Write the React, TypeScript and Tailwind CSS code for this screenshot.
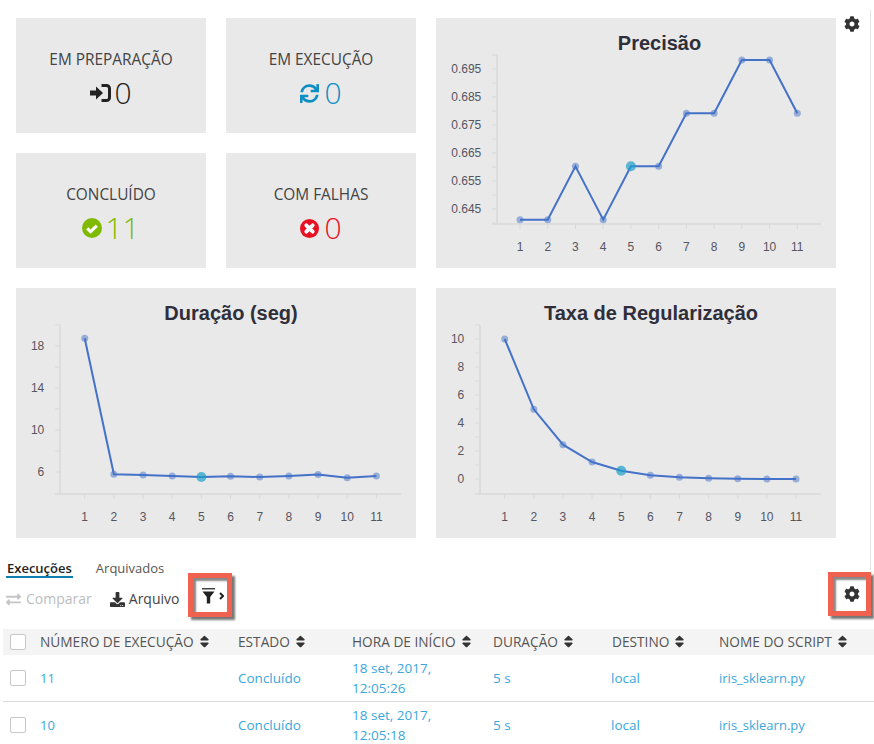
import { FaCog, FaSort, FaExchangeAlt, FaDownload, FaSync } from 'react-icons/fa';
import type { ReactNode } from 'react';

const FONT = 'font-["Open_Sans","Noto_Sans",sans-serif]';

interface ChartProps {
    title: string;
    titleX: number;
    axisX: number;
    lastX: number;
    firstTick: number;
    tickStep: number;
    minorTop: number;
    minorStep: number;
    minorCount: number;
    yLabels: { label: string; y: number }[];
    points: number[];
}

function Chart({ title, titleX, axisX, lastX, firstTick, tickStep, minorTop, minorStep, minorCount, yLabels, points }: ChartProps) {
    const xs = points.map((_, i) => firstTick + i * tickStep);
    const bottom = 206;
    return (
        <div className="relative h-[250px] w-[400px] bg-[#e9e9e9]">
            <svg width="400" height="250" viewBox="0 0 400 250" className="block">
                <text x={titleX} y="32" textAnchor="middle" fontSize="20" fontWeight="700" fill="#2f2f3b" fontFamily="Liberation Sans, sans-serif">{title}</text>
                <line x1={axisX} y1="37" x2={axisX} y2={bottom + 0.5} stroke="#d9d9d9" strokeWidth="1.5" />
                <line x1={axisX - 5} y1={bottom} x2={lastX} y2={bottom} stroke="#d9d9d9" strokeWidth="1.5" />
                {Array.from({ length: minorCount }).map((_, i) => (
                    <line key={i} x1={axisX - 5} x2={axisX} y1={minorTop + i * minorStep} y2={minorTop + i * minorStep} stroke="#d9d9d9" />
                ))}
                {yLabels.map((t) => (
                    <g key={t.label}>
                        <line x1={axisX - 5} x2={axisX} y1={t.y} y2={t.y} stroke="#d9d9d9" />
                        <text x={axisX - 15.7} y={t.y + 4.4} textAnchor="end" fontSize="12" fill="#55555f" fontFamily="Liberation Sans, sans-serif">{t.label}</text>
                    </g>
                ))}
                {xs.map((x, i) => (
                    <g key={i}>
                        <line x1={x} x2={x} y1={bottom} y2={bottom + 5} stroke="#d9d9d9" />
                        <text x={x} y={bottom + 26.5} textAnchor="middle" fontSize="12" fill="#55555f" fontFamily="Liberation Sans, sans-serif">{i + 1}</text>
                    </g>
                ))}
                <polyline fill="none" stroke="#4472c8" strokeWidth="2" points={xs.map((x, i) => `${x},${points[i]}`).join(' ')} />
                {xs.map((x, i) => (
                    i === 4
                        ? <circle key={i} cx={x} cy={points[i]} r="5" fill="#1e9fcb" fillOpacity="0.7" />
                        : <circle key={i} cx={x} cy={points[i]} r="3.5" fill="#4472c8" fillOpacity="0.5" />
                ))}
            </svg>
        </div>
    );
}

function StatCard({ label, icon, value, color, gap }: { label: string; icon: ReactNode; value: string; color: string; gap: string }) {
    return (
        <div className="flex h-[115px] w-[190px] flex-col items-center bg-[#e9e9e9] pt-[30px]">
            <div className="text-[15.4px] leading-[23px] text-[#444]">{label}</div>
            <div className={`mt-[3px] flex items-center text-[30px] font-[350] leading-[38px] ${gap} ${color}`}>
                {icon}
                <span>{value}</span>
            </div>
        </div>
    );
}

function SignInIcon() {
    return (
        <svg width="21" height="18" viewBox="0 0 21 18">
            <rect x="0" y="6.5" width="7" height="5" fill="currentColor" />
            <path d="M6 2.5L13 9L6 15.5Z" fill="currentColor" />
            <path d="M11.5 1.5H16.5A3 3 0 0 1 19.5 4.5V13.5A3 3 0 0 1 16.5 16.5H11.5" fill="none" stroke="currentColor" strokeWidth="3" />
        </svg>
    );
}

function CheckIcon() {
    return (
        <svg width="20" height="20" viewBox="0 0 20 20">
            <circle cx="10" cy="10" r="10" fill="currentColor" />
            <path d="M5.2 10.4L8.6 13.6L14.8 7.6" fill="none" stroke="#fff" strokeWidth="3.2" />
        </svg>
    );
}

function FailIcon() {
    return (
        <svg width="19" height="19" viewBox="0 0 19 19">
            <circle cx="9.5" cy="9.5" r="9.5" fill="currentColor" />
            <path d="M6.3 6.3L12.7 12.7M12.7 6.3L6.3 12.7" fill="none" stroke="#fff" strokeWidth="3.8" strokeLinecap="round" />
        </svg>
    );
}

function SortHead({ children }: { children: ReactNode }) {
    return (
        <div className="flex items-center gap-[3px] whitespace-nowrap uppercase">
            {children}
            <FaSort className="text-[15px] text-[#333]" />
        </div>
    );
}

function Checkbox() {
    return <div className="ml-[7px] h-[16px] w-[16px] rounded-[2px] border border-[#c8c8c8] bg-white" />;
}

function Row({ id, time }: { id: string; time: string }) {
    return (
        <div className="grid h-[47px] grid-cols-[37px_198px_114px_141px_119px_107px_1fr] items-center border-b border-[#d9d9d9] text-[13.5px] leading-[20px] text-[#3aa7dc]">
            <Checkbox />
            <div className="text-[13px]">{id}</div>
            <div>Concluído</div>
            <div>18 set, 2017,<br />{time}</div>
            <div>5 s</div>
            <div className="-ml-px">local</div>
            <div className="text-[13px]">iris_sklearn.py</div>
        </div>
    );
}

export default function App() {
    return (
        <div className={`relative h-[744px] w-[874px] overflow-hidden bg-white ${FONT}`}>
            {/* hairline on the right of the dashboard */}
            <div className="absolute left-[870px] top-[10px] h-[560px] w-px bg-[#e6e6e6]" />

            <div className="flex pl-4 pt-[18px]">
                <div className="grid w-[820px] grid-cols-[190px_190px_400px] gap-5">
                    <StatCard label="EM PREPARAÇÃO" value="0" color="text-[#222]" gap="gap-[3px]" icon={<SignInIcon />} />
                    <StatCard label="EM EXECUÇÃO" value="0" color="text-[#0e8fc4]" gap="gap-[5px]" icon={<FaSync className="text-[19px]" />} />
                    <div className="row-span-2">
                        <Chart
                            title="Precisão"
                            titleX={223.5}
                            axisX={61}
                            lastX={385}
                            firstTick={84}
                            tickStep={27.73}
                            minorTop={37}
                            minorStep={28}
                            minorCount={7}
                            yLabels={[
                                { label: '0.695', y: 51 },
                                { label: '0.685', y: 79 },
                                { label: '0.675', y: 107 },
                                { label: '0.665', y: 135 },
                                { label: '0.655', y: 163 },
                                { label: '0.645', y: 191 },
                            ]}
                            points={[201.7, 201.7, 148.3, 201.7, 148.3, 148.3, 95.3, 95.3, 42, 42, 95.3]}
                        />
                    </div>
                    <StatCard label="CONCLUÍDO" value="11" color="text-[#7fba00]" gap="gap-[3px]" icon={<CheckIcon />} />
                    <StatCard label="COM FALHAS" value="0" color="text-[#e81123]" gap="gap-[5px]" icon={<FailIcon />} />
                    <div className="col-span-2">
                        <Chart
                            title="Duração (seg)"
                            titleX={215}
                            axisX={44}
                            lastX={385}
                            firstTick={68.7}
                            tickStep={29.17}
                            minorTop={37}
                            minorStep={42}
                            minorCount={4}
                            yLabels={[
                                { label: '18', y: 58 },
                                { label: '14', y: 100 },
                                { label: '10', y: 142 },
                                { label: '6', y: 184 },
                            ]}
                            points={[50.3, 186.3, 187, 188, 189, 188.3, 189, 188, 186.5, 189.7, 188]}
                        />
                    </div>
                    <Chart
                        title="Taxa de Regularização"
                        titleX={215}
                        axisX={44}
                        lastX={385}
                        firstTick={68.7}
                        tickStep={29.13}
                        minorTop={37}
                        minorStep={28}
                        minorCount={6}
                        yLabels={[
                            { label: '10', y: 51 },
                            { label: '8', y: 79 },
                            { label: '6', y: 107 },
                            { label: '4', y: 135 },
                            { label: '2', y: 163 },
                            { label: '0', y: 191 },
                        ]}
                        points={[51, 121.3, 156.7, 174, 182.7, 187.3, 189.3, 190.3, 190.7, 191, 191]}
                    />
                </div>
                <FaCog className="ml-2 mt-[-2px] text-[16px] text-[#333]" />
            </div>

            {/* tabs and toolbar */}
            <div className="mt-5 flex h-[71px] items-start pl-[6px] pr-[3px]">
                <div className="w-[182px]">
                    <div className="flex h-[20px] gap-[23px] text-[13px] leading-[20px]">
                        <div className="border-b-2 border-[#0e7fb0] px-px font-semibold text-[#222]">Execuções</div>
                        <div className="text-[#555]">Arquivados</div>
                    </div>
                    <div className="mt-[10px] flex items-center text-[14px] leading-[22px]">
                        <FaExchangeAlt className="text-[15px] text-[#c4c4c4]" />
                        <span className="ml-[5px] text-[#bdbdbd]">Comparar</span>
                        <FaDownload className="ml-[18px] text-[15px] text-[#333]" />
                        <span className="ml-[4px] text-[#444]">Arquivo</span>
                    </div>
                </div>
                <div className="mt-[15px] flex h-[44px] w-[44px] items-center justify-center gap-[4px] border-[5px] border-[#f0614f] bg-white pl-[6px] pt-[2px] shadow-[3px_3px_2px_#777,inset_3px_3px_2px_#888]">
                    <svg width="13" height="16" viewBox="0 0 13 16">
                        <rect x="0" y="0" width="13" height="1.5" fill="#444" />
                        <path d="M0.5 3.5H12.5L8.2 9V15.5H4.8V9Z" fill="#222" />
                    </svg>
                    <svg width="5" height="8" viewBox="0 0 5 8">
                        <path d="M1 1L4 4L1 7" fill="none" stroke="#222" strokeWidth="2" />
                    </svg>
                </div>
                <div className="ml-auto mt-[14px] flex h-[44px] w-[43px] items-center justify-center border-[5px] border-[#f0614f] bg-white pl-[5px] shadow-[3px_3px_2px_#777,inset_3px_3px_2px_#888]">
                    <FaCog className="text-[16px] text-[#333]" />
                </div>
            </div>

            {/* runs table */}
            <div className="ml-[3px]">
                <div className="grid h-[26px] grid-cols-[37px_198px_114px_141px_119px_107px_1fr] items-center bg-[#f4f4f4] text-[13.7px] text-[#555]">
                    <Checkbox />
                    <SortHead>Número de execução</SortHead>
                    <SortHead>Estado</SortHead>
                    <SortHead>Hora de início</SortHead>
                    <SortHead>Duração</SortHead>
                    <SortHead>Destino</SortHead>
                    <SortHead>Nome do script</SortHead>
                </div>
                <Row id="11" time="12:05:26" />
                <Row id="10" time="12:05:18" />
            </div>
        </div>
    );
}
